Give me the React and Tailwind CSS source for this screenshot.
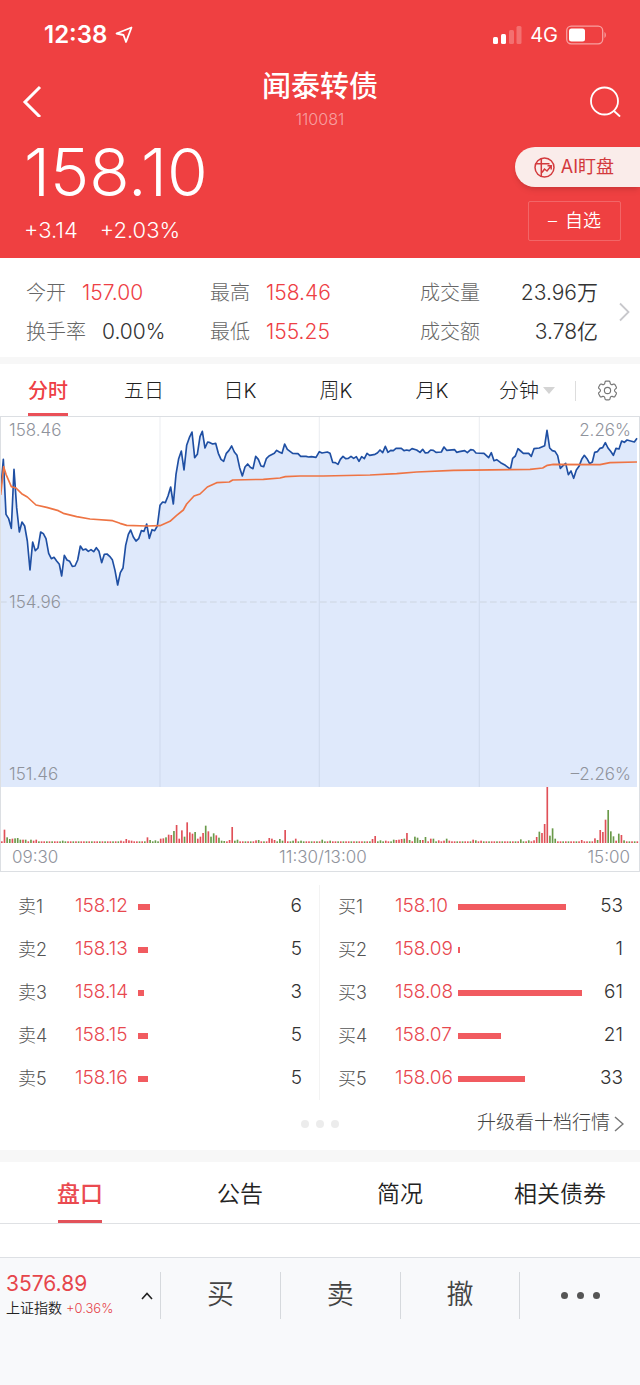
import clsx from "clsx";
import { HiOutlineCog6Tooth } from "react-icons/hi2";

const periods = ["分时", "五日", "日K", "周K", "月K"];
const infoTabs = ["盘口", "公告", "简况", "相关债券"];

const asks = [
    { label: "卖1", price: "158.12", volume: 6 },
    { label: "卖2", price: "158.13", volume: 5 },
    { label: "卖3", price: "158.14", volume: 3 },
    { label: "卖4", price: "158.15", volume: 5 },
    { label: "卖5", price: "158.16", volume: 5 },
];

const bids = [
    { label: "买1", price: "158.10", volume: 53 },
    { label: "买2", price: "158.09", volume: 1 },
    { label: "买3", price: "158.08", volume: 61 },
    { label: "买4", price: "158.07", volume: 21 },
    { label: "买5", price: "158.06", volume: 33 },
];

const pricePoints =
    "2,225 10,130 18,295 26,308 34,337 42,160 50,275 58,348 66,318 74,330 82,375 90,462 98,378 106,404 114,396 122,348 130,353 138,368 146,412 154,428 162,424 170,435 178,445 185,480 193,418 201,432 209,436 217,451 225,450 233,432 241,390 249,402 257,399 265,406 273,401 281,407 289,395 297,406 305,440 313,415 321,414 329,421 337,431 345,463 353,507 361,470 369,456 377,388 385,355 392,342 400,363 408,375 416,368 424,344 432,346 440,324 448,367 456,341 464,344 472,330 480,268 488,258 496,260 504,240 512,213 520,264 528,175 536,128 544,105 552,162 560,88 568,65 576,48 584,125 592,115 600,62 607,46 615,96 623,78 630,80 638,84 647,82 655,112 663,130 671,136 679,112 687,103 695,90 703,108 711,118 719,155 727,180 735,153 743,144 751,154 759,158 767,121 775,130 783,150 791,152 799,128 807,120 823,112 830,103 838,108 846,112 854,84 862,100 878,112 894,113 902,121 918,121 926,123 934,122 948,124 958,107 966,111 982,108 990,112 998,139 1006,140 1014,145 1021,130 1029,121 1037,128 1045,127 1053,121 1061,127 1069,122 1077,136 1085,122 1093,128 1101,112 1109,118 1125,115 1132,111 1140,102 1148,110 1156,91 1164,109 1172,103 1180,104 1188,97 1204,97 1212,104 1220,102 1228,104 1236,98 1250,102 1260,109 1268,100 1276,111 1284,110 1292,102 1300,103 1308,109 1324,108 1332,93 1340,103 1364,101 1370,109 1378,107 1394,104 1402,110 1412,101 1420,102 1428,111 1452,112 1466,125 1474,110 1482,134 1490,131 1502,140 1516,148 1528,157 1532,156 1538,127 1546,120 1554,98 1562,105 1570,112 1586,112 1594,121 1602,98 1618,96 1634,89 1641,43 1649,96 1657,104 1665,106 1673,119 1681,157 1689,149 1697,142 1705,176 1713,165 1721,187 1729,162 1737,151 1745,130 1753,118 1761,128 1769,143 1777,138 1784,109 1792,107 1800,97 1808,95 1816,80 1824,96 1832,106 1840,118 1848,97 1857,99 1865,75 1873,79 1881,72 1903,78 1911,67";

const averagePoints =
    "2,237 11,152 18,175 34,212 48,216 65,233 82,243 108,267 140,274 175,284 190,292 230,302 270,309 338,314 360,322 380,328 440,330 480,329 510,316 530,298 550,282 560,264 582,240 600,234 622,213 650,200 688,198 698,192 790,190 840,186 856,182 900,180 970,180 1110,177 1190,173 1250,168 1360,163 1590,160 1628,156 1642,148 1660,145 1800,146 1830,140 1911,138";

// minute: [height, rising]
const volumes = {
    1: [40, 1], 2: [17, 0], 3: [12, 0], 4: [13, 1], 5: [14, 0], 6: [15, 0], 7: [10, 0], 8: [10, 1], 9: [10, 0], 11: [10, 0],
    12: [7, 1], 13: [10, 1], 23: [7, 0], 45: [7, 1], 47: [12, 1], 48: [8, 1], 49: [7, 1], 55: [17, 1], 56: [9, 0], 58: [8, 0],
    60: [13, 1], 61: [14, 1], 62: [17, 0], 63: [25, 1], 64: [24, 1], 65: [36, 0], 66: [54, 1], 67: [13, 1], 68: [38, 1], 69: [19, 0],
    70: [62, 1], 71: [32, 1], 72: [28, 1], 73: [33, 0], 74: [13, 1], 75: [19, 1], 76: [30, 1], 77: [52, 0], 78: [35, 1], 79: [19, 0],
    80: [29, 0], 81: [23, 1], 82: [16, 0], 83: [7, 0], 84: [6, 0], 86: [9, 1], 87: [48, 1], 88: [7, 0], 89: [10, 0], 96: [8, 1],
    97: [9, 0], 101: [15, 1], 102: [13, 1], 103: [9, 1], 105: [12, 0], 106: [7, 0], 107: [39, 1], 110: [7, 0], 111: [13, 1], 113: [7, 0],
    121: [10, 0], 124: [7, 0], 140: [12, 1], 141: [21, 1], 143: [8, 0], 145: [7, 1], 148: [10, 0], 149: [9, 1], 150: [10, 1], 151: [12, 1],
    152: [13, 0], 153: [30, 1], 154: [9, 0], 156: [19, 0], 157: [16, 0], 158: [9, 0], 159: [9, 1], 160: [18, 0], 162: [13, 1], 163: [13, 0],
    165: [8, 1], 167: [7, 1], 168: [13, 0], 169: [7, 1], 178: [10, 1], 179: [8, 0], 181: [7, 1], 196: [11, 0], 199: [8, 0], 201: [8, 1],
    202: [18, 1], 203: [34, 0], 204: [30, 1], 205: [57, 1], 206: [168, 1], 207: [22, 0], 208: [44, 0], 209: [13, 0], 219: [9, 1], 224: [14, 1],
    225: [9, 0], 226: [39, 1], 227: [33, 1], 228: [70, 1], 229: [99, 0], 230: [35, 0], 231: [20, 0], 232: [7, 1], 233: [28, 0], 234: [24, 1],
    235: [8, 0],
};

const bars = Array.from({ length: 241 }, (_, i) => {
    const [height, up] = volumes[i] || [5, (i * 7) % 5 < 3];
    return { x: i * 7.956, height, up };
});

function StatusBar() {
    return (
        <div className="flex h-[70px] items-center justify-between pr-[33px] pl-11 text-white">
            <div className="flex items-center gap-2">
                <span className="text-2xl font-semibold">12:38</span>
                <svg className="size-[18px]" viewBox="0 0 18 18" fill="none" stroke="currentColor" strokeWidth="1.8" strokeLinejoin="round" aria-hidden="true">
                    <path d="M16.500 1.500 1.500 7.500l7 1.500 2.500 7z" />
                </svg>
            </div>
            <div className="flex items-center gap-2">
                <svg className="h-5 w-[30px]" viewBox="0 0 30 20" fill="currentColor" aria-hidden="true">
                    <rect x="1" y="12" width="5" height="7" rx="1.500" />
                    <rect x="9" y="9" width="5" height="10" rx="1.500" />
                    <rect x="17" y="5" width="5" height="14" rx="1.500" opacity=".25" />
                    <rect x="24.500" y="1" width="5" height="18" rx="1.500" opacity=".25" />
                </svg>
                <span className="text-xl">4G</span>
                <svg className="h-5 w-[41px]" viewBox="0 0 41 20" aria-hidden="true">
                    <rect x=".7" y="1.200" width="36" height="17.600" rx="4.500" fill="none" stroke="#fff" strokeWidth="1.300" opacity=".5" />
                    <rect x="3" y="3.500" width="16" height="13" rx="2.500" fill="#fff" />
                    <path d="M38.500 7c1.800.8 1.800 5.200 0 6z" fill="#fff" opacity=".5" />
                </svg>
            </div>
        </div>
    );
}

function Header() {
    return (
        <header className="bg-[#ef4041] pb-[10px] text-white">
            <StatusBar />
            <div className="flex h-[62px] items-center justify-between px-[19px]">
                <button type="button" aria-label="返回" className="w-8 pl-[3px]">
                    <svg className="h-8 w-5" viewBox="0 0 20 32" fill="none" stroke="currentColor" strokeWidth="3" aria-hidden="true">
                        <path d="M18 2 3 17l15 15" />
                    </svg>
                </button>
                <div className="pb-1 text-center">
                    <h1 className="text-[29px] leading-9 font-medium">闻泰转债</h1>
                    <p className="mt-1 text-base leading-5 font-light text-white/50">110081</p>
                </div>
                <button type="button" aria-label="搜索">
                    <svg className="size-8" viewBox="0 0 32 32" fill="none" stroke="currentColor" strokeWidth="1.800" strokeLinecap="round" aria-hidden="true">
                        <circle cx="15.500" cy="16" r="13.500" />
                        <path d="m25 26 5.500 5" />
                    </svg>
                </button>
            </div>
            <div className="flex justify-between">
                <div className="pl-6">
                    <div className="text-[66px] leading-[80px] font-light">158.10</div>
                    <div className="flex gap-[22px] text-[22px] leading-9 font-light">
                        <span>+3.14</span>
                        <span>+2.03%</span>
                    </div>
                </div>
                <div className="flex flex-col items-end gap-[14px] pt-[15px]">
                    <button type="button" className="flex h-10 items-center gap-1.5 rounded-l-full bg-[#faecea] pr-[26px] pl-[19px] text-lg text-[#d33a3d] shadow-md">
                        <svg className="size-[21px]" viewBox="0 0 21 21" fill="none" stroke="currentColor" strokeWidth="1.500" aria-hidden="true">
                            <circle cx="10.500" cy="10.500" r="9.500" />
                            <path d="M1.500 6.800h14M7.300 1.800v17.400M8 15.500l2.500-3.500 2.500 2 4-5M13.500 8.800h3.700v3.700" />
                        </svg>
                        AI盯盘
                    </button>
                    <button type="button" className="mr-[19px] flex h-10 w-[93px] items-center justify-center gap-2 rounded-xs border border-white/20 text-lg font-[350]">
                        <span>–</span>
                        <span>自选</span>
                    </button>
                </div>
            </div>
        </header>
    );
}

function Stat({ label, value, up, spread }) {
    return (
        <div className={clsx("flex items-center gap-4", spread && "justify-between")}>
            <dt className="text-xl font-light text-[#666]">{label}</dt>
            <dd className={clsx("text-[21px] font-[350]", up ? "text-[#ee4045]" : "text-[#333]")}>{value}</dd>
        </div>
    );
}

function Stats() {
    return (
        <section className="flex items-center border-b-[7px] border-[#f7f7f7] pt-[15px] pr-[10px] pb-1.5 pl-[26px]">
            <dl className="grid flex-1 grid-cols-[184fr_210fr_178fr] leading-[39px]">
                <Stat label="今开" value="157.00" up />
                <Stat label="最高" value="158.46" up />
                <Stat label="成交量" value="23.96万" spread />
                <Stat label="换手率" value="0.00%" />
                <Stat label="最低" value="155.25" up />
                <Stat label="成交额" value="3.78亿" spread />
            </dl>
            <button type="button" aria-label="更多行情" className="ml-5">
                <svg className="h-5 w-3" viewBox="0 0 12 20" fill="none" stroke="#c8c8cc" strokeWidth="1.800" aria-hidden="true">
                    <path d="m2 1.500 8.500 8.500L2 18.500" />
                </svg>
            </button>
        </section>
    );
}

function PeriodTabs() {
    return (
        <nav className="grid h-[52px] grid-cols-[repeat(5,96fr)_160fr] text-xl text-[#222]">
            {periods.map((name, i) => (
                <button key={name} type="button" className="flex justify-center">
                    <span
                        className={clsx(
                            "flex h-full items-center border-b-[3px] pt-1",
                            i === 0 ? "border-[#ea5058] font-medium text-[#ee4045]" : "border-transparent font-light"
                        )}
                    >
                        {name}
                    </span>
                </button>
            ))}
            <div className="flex items-center justify-between pt-px pr-[20px] pl-[19px]">
                <div className="relative flex items-center">
                    <select aria-label="分钟周期" className="w-14 appearance-none bg-transparent font-light outline-none">
                        <option>分钟</option>
                    </select>
                    <span className="pointer-events-none absolute right-0 border-x-[6px] border-t-[7px] border-x-transparent border-t-[#d4d4d4]" />
                </div>
                <span className="h-5 w-px bg-[#ddd]" />
                <button type="button" aria-label="图表设置" className="text-[#777]">
                    <HiOutlineCog6Tooth size={25} strokeWidth={1.1} />
                </button>
            </div>
        </nav>
    );
}

function Chart() {
    return (
        <section className="border border-[#dcdfe3] text-[17px] font-light text-[#8f939c]">
            <div className="relative h-[370px]">
                <svg className="size-full" viewBox="3 3 1914 1110" preserveAspectRatio="none" fill="none" role="img" aria-label="分时走势">
                    <polygon points={`2,1113 ${pricePoints} 1911,1113`} fill="#dfe9fb" />
                    <path d="M480 0v1113M958 0v1113M1438 0v1113" stroke="#8090a8" strokeOpacity=".16" strokeWidth="3" />
                    <path d="M0 558h1917" stroke="#cdd5e0" strokeWidth="3" strokeDasharray="20 10" />
                    <polyline points={pricePoints} stroke="#1f4fa3" strokeWidth="5" strokeLinejoin="round" />
                    <polyline points={averagePoints} stroke="#ee7444" strokeWidth="5" strokeLinejoin="round" />
                </svg>
                <div className="absolute inset-y-0 left-2 flex flex-col justify-between leading-[26px]">
                    <span>158.46</span>
                    <span>154.96</span>
                    <span>151.46</span>
                </div>
                <div className="absolute inset-y-0 right-2 flex flex-col justify-between text-right leading-[26px]">
                    <span>2.26%</span>
                    <span>–2.26%</span>
                </div>
            </div>
            <svg className="h-14 w-full" viewBox="0 0 1917 168" preserveAspectRatio="none" role="img" aria-label="成交量">
                {bars.map((bar) => (
                    <rect key={bar.x} x={bar.x} y={168 - bar.height} width="5" height={bar.height} fill={bar.up ? "#e05058" : "#6a9a4a"} />
                ))}
            </svg>
            <div className="flex justify-between pr-[9px] pl-[11px] leading-7">
                <span>09:30</span>
                <span>11:30/13:00</span>
                <span>15:00</span>
            </div>
        </section>
    );
}

function OrderTable({ title, rows }) {
    return (
        <table aria-label={title} className="w-full table-fixed text-left">
            <tbody>
                {rows.map((row) => (
                    <tr key={row.label} className="h-[43px]">
                        <th scope="row" className="w-[75px] pl-[18px] text-lg font-light text-[#555]">{row.label}</th>
                        <td className="w-[63px] text-[19px] font-light text-[#e8484f]">{row.price}</td>
                        <td>
                            <div className="h-1.5 bg-[#f15b60]" style={{ width: `${(row.volume / 61) * 100}%` }} />
                        </td>
                        <td className="w-[58px] pr-[17px] text-right text-[19px] font-[350] text-[#333]">{row.volume}</td>
                    </tr>
                ))}
            </tbody>
        </table>
    );
}

function OrderBook() {
    return (
        <section className="border-b-[12px] border-[#f7f7f7] pt-[13px]">
            <div className="grid grid-cols-2">
                <div className="border-r border-[#f3f3f3]">
                    <OrderTable title="卖盘" rows={asks} />
                </div>
                <OrderTable title="买盘" rows={bids} />
            </div>
            <div className="grid h-[50px] grid-cols-[1fr_auto_1fr] items-center px-4 pb-[3px]">
                <span />
                <span className="flex gap-[7px]">
                    <i className="size-2 rounded-full bg-[#ececec]" />
                    <i className="size-2 rounded-full bg-[#ececec]" />
                    <i className="size-2 rounded-full bg-[#ececec]" />
                </span>
                <a href="#levels" className="flex items-center gap-1 justify-self-end text-[19px] font-light text-[#444]">
                    升级看十档行情
                    <svg className="h-4 w-[10px]" viewBox="0 0 10 16" fill="none" stroke="#777" strokeWidth="1.500" aria-hidden="true">
                        <path d="m1 1 8 7-8 7" />
                    </svg>
                </a>
            </div>
        </section>
    );
}

function InfoTabs() {
    return (
        <nav className="mb-[33px] grid h-[62px] grid-cols-4 border-b border-[#dfe1e4] text-[23px] text-[#222]">
            {infoTabs.map((name, i) => (
                <button key={name} type="button" className={clsx("relative pt-1", i === 0 ? "font-medium text-[#ea4a50]" : "font-[350]")}>
                    {name}
                    {i === 0 && <span className="absolute bottom-0 left-1/2 h-[3px] w-11 -translate-x-1/2 bg-[#e2525a]" />}
                </button>
            ))}
        </nav>
    );
}

function TradeBar() {
    return (
        <footer className="grid flex-1 grid-cols-[1fr_3fr] content-start border-t border-[#dde0e4] bg-[#f8f9fb] pt-[14px]">
            <button type="button" className="flex h-[47px] items-center justify-between pr-[7px] pl-1.5 text-left">
                <span>
                    <span className="block text-[21px] leading-6 text-[#e6464b]">3576.89</span>
                    <span className="block text-sm leading-6 font-[350] whitespace-nowrap text-[#222]">
                        上证指数 <span className="text-[13px] text-[#e6464b]">+0.36%</span>
                    </span>
                </span>
                <svg className="h-2 w-3" viewBox="0 0 12 8" fill="none" stroke="#222" strokeWidth="1.600" aria-hidden="true">
                    <path d="m1 7 5-5.500L11 7" />
                </svg>
            </button>
            <div className="grid grid-cols-4 divide-x divide-[#d6d9dd] border-l border-[#d6d9dd] text-[27px] font-[350] text-[#444]">
                <button type="button">买</button>
                <button type="button">卖</button>
                <button type="button">撤</button>
                <button type="button" aria-label="更多" className="flex items-center justify-center gap-[9px]">
                    <i className="size-[7px] rounded-full bg-[#555]" />
                    <i className="size-[7px] rounded-full bg-[#555]" />
                    <i className="size-[7px] rounded-full bg-[#555]" />
                </button>
            </div>
        </footer>
    );
}

export default function App() {
    return (
        <div className="flex min-h-screen flex-col bg-white font-['Inter','Noto_Sans_CJK_SC',sans-serif]">
            <Header />
            <Stats />
            <PeriodTabs />
            <Chart />
            <OrderBook />
            <InfoTabs />
            <TradeBar />
        </div>
    );
}
